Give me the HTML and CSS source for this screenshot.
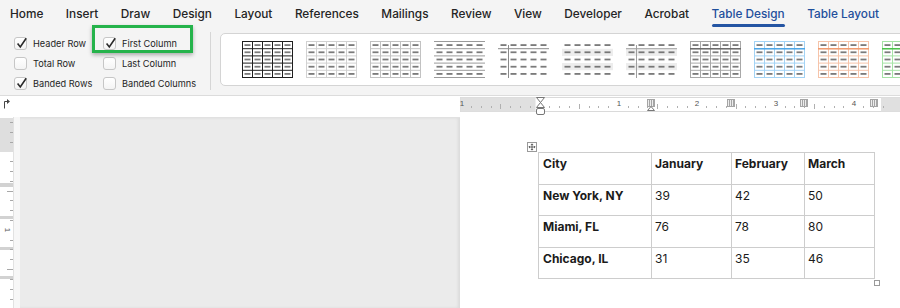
FILE: index.html
```html
<!DOCTYPE html>
<html lang="en">
<head>
    <meta charset="UTF-8">
    <meta name="viewport" content="width=device-width, initial-scale=1.0">
    <title>Table Design</title>
    <link rel="stylesheet" href="styles.css">
</head>
<body>
    <div class="tabs">
        <span class="tab">Home</span>
        <span class="tab">Insert</span>
        <span class="tab">Draw</span>
        <span class="tab">Design</span>
        <span class="tab">Layout</span>
        <span class="tab">References</span>
        <span class="tab">Mailings</span>
        <span class="tab">Review</span>
        <span class="tab">View</span>
        <span class="tab">Developer</span>
        <span class="tab">Acrobat</span>
        <span class="tab blue active">Table Design</span>
        <span class="tab blue">Table Layout</span>
    </div>

    <div class="ribbon">
        <div class="options">
            <div class="opt-col first">
                <div class="opt"><span class="box"><svg viewBox="0 0 13 13"><path d="M2.6 6.6l2.7 3.4L11.2 1.2"/></svg></span>Header Row</div>
                <div class="opt"><span class="box"></span>Total Row</div>
                <div class="opt"><span class="box"><svg viewBox="0 0 13 13"><path d="M2.6 6.6l2.7 3.4L11.2 1.2"/></svg></span>Banded Rows</div>
            </div>
            <div class="opt-col">
                <div class="opt"><span class="box"><svg viewBox="0 0 13 13"><path d="M2.6 6.6l2.7 3.4L11.2 1.2"/></svg></span>First Column</div>
                <div class="opt"><span class="box"></span>Last Column</div>
                <div class="opt"><span class="box"></span>Banded Columns</div>
            </div>
        </div>
        <div class="divider"></div>
        <div class="gallery">
            <svg class="thumb" viewBox="0 0 51 37">
                <defs>
                    <pattern id="dash" x="0.5" y="0.5" width="10" height="7.2" patternUnits="userSpaceOnUse"><rect x="2" y="2.9" width="6" height="1.4" fill="#555"/></pattern>
                    <path id="grid" fill="none" d="M0.5 0V37M10.5 0V37M20.5 0V37M30.5 0V37M40.5 0V37M50.5 0V37M0 0.5H51M0 7.7H51M0 14.9H51M0 22.1H51M0 29.3H51M0 36.5H51"/>
                    <path id="rows" fill="none" d="M0 0.5H51M0 7.7H51M0 14.9H51M0 22.1H51M0 29.3H51M0 36.5H51"/>
                    <path id="band" d="M0 7.7H51V14.9H0ZM0 22.1H51V29.3H0Z"/>
                </defs>
                <use href="#grid" stroke="#1e1e1e"/>
                <rect width="51" height="37" fill="url(#dash)"/>
            </svg>
            <svg class="thumb" viewBox="0 0 51 37">
                <use href="#grid" stroke="#d2d2d2"/>
                <rect width="51" height="37" fill="url(#dash)"/>
            </svg>
            <svg class="thumb" viewBox="0 0 51 37">
                <use href="#grid" stroke="#c2c2c2"/>
                <rect width="51" height="37" fill="url(#dash)"/>
            </svg>
            <svg class="thumb" viewBox="0 0 51 37">
                <use href="#rows" stroke="#9a9a9a"/>
                <rect width="51" height="37" fill="url(#dash)"/>
            </svg>
            <svg class="thumb" viewBox="0 0 51 37">
                <path d="M0 7.7H51M10.5 4V37" stroke="#8a8a8a" fill="none"/>
                <rect width="51" height="37" fill="url(#dash)"/>
            </svg>
            <svg class="thumb" viewBox="0 0 51 37">
                <use href="#band" fill="#ededed"/>
                <rect width="51" height="37" fill="url(#dash)"/>
            </svg>
            <svg class="thumb" viewBox="0 0 51 37">
                <use href="#band" fill="#ededed"/>
                <path d="M0 7.7H51M10.5 4V37" stroke="#a0a0a0" fill="none"/>
                <rect width="51" height="37" fill="url(#dash)"/>
            </svg>
            <svg class="thumb" viewBox="0 0 51 37">
                <use href="#grid" stroke="#a8a8a8"/>
                <path d="M0 7.7H51" stroke="#6c6c6c" stroke-width="1.4"/>
                <rect width="51" height="37" fill="url(#dash)"/>
            </svg>
            <svg class="thumb" viewBox="0 0 51 37">
                <use href="#grid" stroke="#a3d3f5"/>
                <path d="M0 7.7H51" stroke="#4ea6e6" stroke-width="1.4"/>
                <rect width="51" height="37" fill="url(#dash)"/>
            </svg>
            <svg class="thumb" viewBox="0 0 51 37">
                <use href="#grid" stroke="#f6c4aa"/>
                <path d="M0 7.7H51" stroke="#ef9b70" stroke-width="1.4"/>
                <rect width="51" height="37" fill="url(#dash)"/>
            </svg>
            <svg class="thumb" viewBox="0 0 51 37">
                <use href="#grid" stroke="#a6e3a6"/>
                <path d="M0 7.7H51" stroke="#4cc24c" stroke-width="1.4"/>
                <rect width="51" height="37" fill="url(#dash)"/>
            </svg>
        </div>
    </div>

    <div class="highlight"></div>

    <div class="ruler-row">
        <svg class="corner" width="14" height="21" viewBox="0 0 14 21">
            <path d="M4.5 12.5V5.5H8" stroke="#444" fill="none"/>
            <path d="M7 3L10 5.5L7 8Z" fill="#444"/>
        </svg>
        <svg class="hruler" width="886" height="21" viewBox="0 0 886 21">
            <rect x="446.5" y="1.5" width="440" height="14" fill="#fff" stroke="#dadada"/>
            <rect x="446.5" y="1.5" width="75" height="14" fill="#e0e0e0"/>
            <rect x="867" y="1.5" width="19" height="14" fill="#e0e0e0"/>
            <path stroke="#b0b0b0" d="M457.5 10v2M467.5 10v2M477.5 10v2M486.5 8v5M496.5 10v2M506.5 10v2M516.5 10v2M535.5 10v2M545.5 10v2M555.5 10v2M565.5 8v5M575.5 10v2M584.5 10v2M594.5 10v2M614.5 10v2M624.5 10v2M633.5 10v2M643.5 8v5M653.5 10v2M663.5 10v2M673.5 10v2M692.5 10v2M702.5 10v2M712.5 10v2M722.5 8v5M731.5 10v2M741.5 10v2M751.5 10v2M771.5 10v2M780.5 10v2M790.5 10v2M800.5 8v5M810.5 10v2M820.5 10v2M829.5 10v2M849.5 10v2M859.5 10v2M869.5 10v2"/>
            <g class="ruler-num">
                <text x="448" y="10">1</text>
                <text x="605" y="10">1</text>
                <text x="683" y="10">2</text>
                <text x="762" y="10">3</text>
                <text x="840" y="10">4</text>
            </g>
            <g fill="#ececec" stroke="#a5a5a5">
                <rect x="633.5" y="3.5" width="7" height="7"/>
                <rect x="713.5" y="3.5" width="7" height="7"/>
                <rect x="786.5" y="3.5" width="7" height="7"/>
                <rect x="856.5" y="3.5" width="7" height="7"/>
            </g>
            <path stroke="#a5a5a5" d="M635.5 4v6M637.5 4v6M639.5 4v6M715.5 4v6M717.5 4v6M719.5 4v6M788.5 4v6M790.5 4v6M792.5 4v6M858.5 4v6M860.5 4v6M862.5 4v6"/>
            <path d="M633.5 14.5L637 10.5L640.5 14.5Z" fill="#fff" stroke="#777"/>
            <path d="M522.5 1.5H530.5L526.5 6.5ZM522.5 11.5H530.5L526.5 6.5Z" fill="#fff" stroke="#777"/>
            <rect x="522.5" y="12.5" width="8" height="6" rx="1.5" fill="#fff" stroke="#777"/>
        </svg>
    </div>

    <div class="workspace">
        <svg class="vruler" width="14" height="191" viewBox="0 0 14 191">
            <rect width="14" height="191" fill="#fff"/>
            <rect y="1" width="14" height="34" fill="#dedede"/>
            <g fill="#d2d2d2">
                <rect y="66" width="14" height="4"/>
                <rect y="99" width="14" height="3"/>
                <rect y="130" width="14" height="3"/>
                <rect y="159" width="14" height="3"/>
            </g>
            <path stroke="#a8a8a8" d="M10 5.5h3M10 15.5h3M10 25.5h3M10 44.5h3M10 54.5h3M10 64.5h3M7 74.5h6M10 83.5h3M10 93.5h3M10 103.5h3M10 123.5h3M10 132.5h3M10 142.5h3M7 152.5h6M10 162.5h3M10 172.5h3M10 182.5h3"/>
            <text class="ruler-num" x="5" y="113" transform="rotate(90 5 113)">1</text>
            <path d="M13.5 0V191" stroke="#e2e2e2"/>
        </svg>
        <div class="pane"></div>
        <div class="page">
            <div class="move-handle">
                <svg viewBox="0 0 9 9"><path d="M4.5 1V8M1 4.5H8M3.3 2.2L4.5 1L5.7 2.2M3.3 6.8L4.5 8L5.7 6.8M2.2 3.3L1 4.5L2.2 5.7M6.8 3.3L8 4.5L6.8 5.7"/></svg>
            </div>
            <table class="data">
                <colgroup>
                    <col style="width: 113px">
                    <col style="width: 80px">
                    <col style="width: 73px">
                    <col style="width: 70px">
                </colgroup>
                <tr class="head">
                    <td>City</td><td>January</td><td>February</td><td>March</td>
                </tr>
                <tr>
                    <td class="lead">New York, NY</td><td>39</td><td>42</td><td>50</td>
                </tr>
                <tr>
                    <td class="lead">Miami, FL</td><td>76</td><td>78</td><td>80</td>
                </tr>
                <tr>
                    <td class="lead">Chicago, IL</td><td>31</td><td>35</td><td>46</td>
                </tr>
            </table>
            <div class="resize-handle"></div>
        </div>
    </div>
</body>
</html>
```

FILE: styles.css
```css
* {
    box-sizing: border-box;
}
body {
    margin: 0;
    width: 900px;
    height: 308px;
    overflow: hidden;
    position: relative;
    background-color: #f4f4f4;
    font-family: Inter, "Liberation Sans", sans-serif;
    color: #242424;
}
.tabs {
    display: flex;
    gap: 22.5px;
    height: 30px;
    padding: 6px 0 0 10px;
    font-size: 11.8px;
    line-height: 16px;
    font-weight: 500;
    white-space: nowrap;
}
.tab {
    position: relative;
}
.tab.blue {
    color: #1f4f9c;
}
.tab.active::after {
    content: "";
    position: absolute;
    left: 0;
    right: 0;
    top: 18px;
    height: 3px;
    border-radius: 2px;
    background-color: #2455a3;
}
.ribbon {
    display: flex;
    height: 66px;
    border-bottom: 1px solid #dcdcdc;
}
.options {
    display: flex;
    width: 210px;
    flex-shrink: 0;
    padding: 7px 0 0 14px;
}
.opt-col {
    display: flex;
    flex-direction: column;
    gap: 7px;
}
.opt-col.first {
    width: 89px;
}
.opt {
    display: flex;
    align-items: center;
    gap: 6px;
    height: 13px;
    font-size: 9.2px;
    white-space: nowrap;
}
.box {
    width: 13px;
    height: 13px;
    flex-shrink: 0;
    border: 1px solid #c6c6c6;
    border-radius: 3px;
    background: linear-gradient(#fff, #f4f4f4);
    position: relative;
}
.box svg {
    position: absolute;
    left: 0;
    top: -1px;
    width: 13px;
    height: 13px;
    overflow: visible;
}
.box path {
    fill: none;
    stroke: #2a2a2a;
    stroke-width: 1.6;
}
.divider {
    width: 1px;
    flex-shrink: 0;
    margin: 2px 0 5px;
    background-color: #d6d6d6;
}
.gallery {
    display: flex;
    gap: 13px;
    width: 700px;
    height: 53px;
    flex-shrink: 0;
    margin: 3px 0 0 9px;
    padding: 7px 0 0 21px;
    background-color: #fff;
    border: 1px solid #d4d4d4;
    border-radius: 5px;
}
.thumb {
    width: 51px;
    height: 37px;
    flex-shrink: 0;
}
.highlight {
    position: absolute;
    left: 92px;
    top: 25px;
    width: 101px;
    height: 28px;
    border: 3px solid #25b34b;
    box-shadow: 0 2px 4px rgba(0,0,0,0.3);
}
.ruler-row {
    display: flex;
    height: 21px;
    background-color: #fff;
}
.corner, .hruler, .vruler {
    display: block;
    flex-shrink: 0;
}
.ruler-num {
    font-family: "Liberation Sans", sans-serif;
    font-size: 8px;
    fill: #555;
    text-anchor: middle;
}
.workspace {
    display: flex;
    height: 191px;
    background-color: #f7f7f7;
}
.pane {
    width: 440px;
    margin-left: 6px;
    background-color: #ebebeb;
    border-top: 1px solid #e1e1e1;
    box-shadow: inset -2px 0 3px rgba(0,0,0,0.07);
}
.page {
    flex: 1;
    background-color: #fff;
    padding: 25px 0 0 67px;
}
.move-handle {
    width: 10px;
    height: 10px;
    border: 1px solid #9a9a9a;
    background-color: #fff;
}
.move-handle svg {
    display: block;
    width: 8px;
    height: 8px;
}
.move-handle path {
    fill: none;
    stroke: #444;
    stroke-width: 0.9;
}
.data {
    margin-left: 11px;
    border-collapse: collapse;
    table-layout: fixed;
    width: 337px;
    font-size: 12px;
    line-height: 16px;
    color: #1b1b1b;
}
.data td {
    height: 31.5px;
    padding: 3px 3px 0 3px;
    vertical-align: top;
    border: 1px solid #cdcdcd;
    white-space: nowrap;
}
.data tr.head td, .data td.lead {
    font-weight: 700;
}
.data td.lead, .data tr.head td:first-child {
    padding-left: 4px;
}
.resize-handle {
    width: 6px;
    height: 6px;
    margin: 1px 0 0 347px;
    border: 1px solid #9a9a9a;
    background-color: #fff;
}
```
